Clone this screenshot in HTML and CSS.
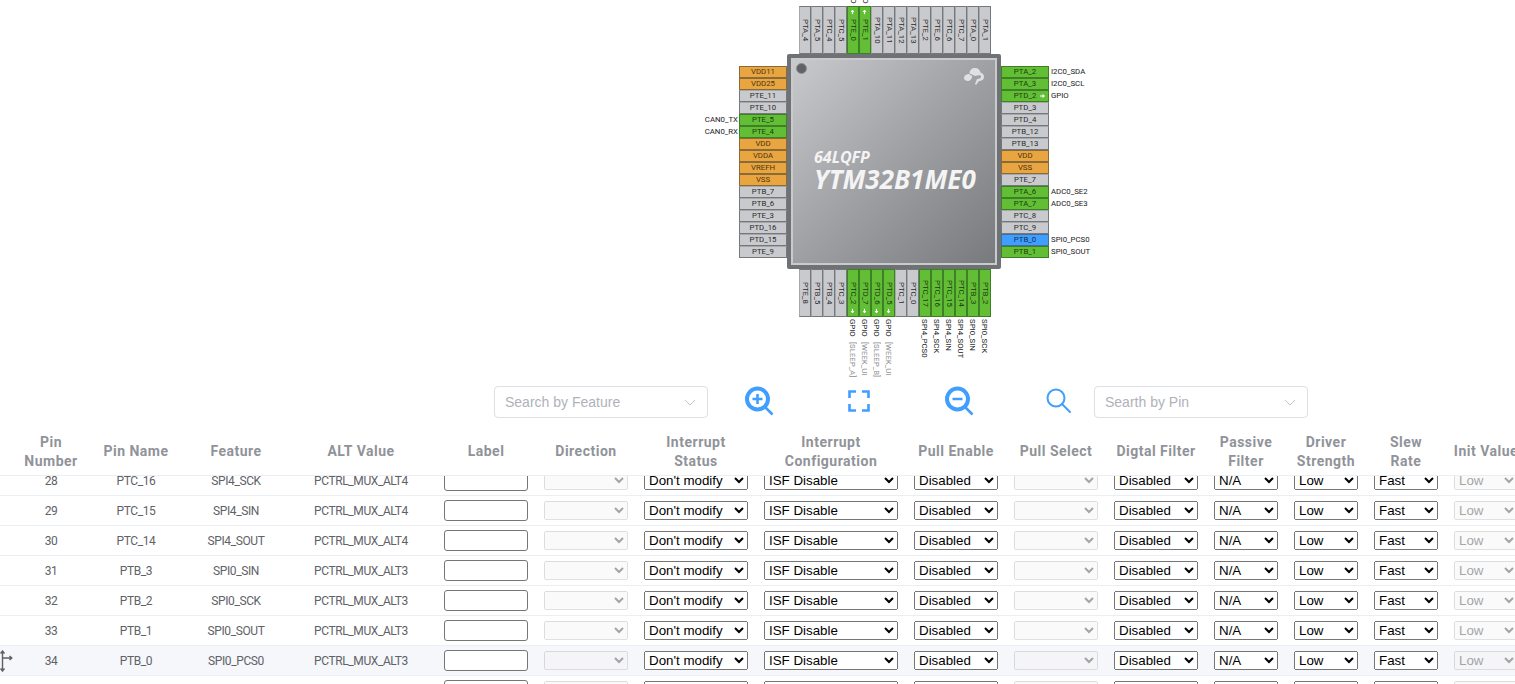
FILE: index.html
```html
<!DOCTYPE html>
<html lang="en">
<head>
<meta charset="utf-8">
<title>Pin configuration</title>
<link rel="stylesheet" href="styles.css">
</head>
<body>
<main class="page">
  <section class="stage">
    <div class="package">
      <div class="pins pins-top">
        <div class="pin">PTA_4</div><div class="pin">PTA_5</div><div class="pin">PTC_4</div><div class="pin">PTC_5</div>
        <div class="pin green">PTE_0<i class="arrow arrow-up"></i><span class="lab lab-top">GPIO</span></div>
        <div class="pin green">PTE_1<i class="arrow arrow-up"></i><span class="lab lab-top">GPIO</span></div>
        <div class="pin">PTA_10</div><div class="pin">PTA_11</div><div class="pin">PTA_12</div><div class="pin">PTA_13</div><div class="pin">PTE_2</div><div class="pin">PTE_6</div><div class="pin">PTC_6</div><div class="pin">PTC_7</div><div class="pin">PTA_0</div><div class="pin">PTA_1</div>
      </div>
      <div class="pins pins-left">
        <div class="pin orange">VDD11</div><div class="pin orange">VDD25</div><div class="pin">PTE_11</div><div class="pin">PTE_10</div>
        <div class="pin green">PTE_5<span class="lab lab-left">CAN0_TX</span></div>
        <div class="pin green">PTE_4<span class="lab lab-left">CAN0_RX</span></div>
        <div class="pin orange">VDD</div><div class="pin orange">VDDA</div><div class="pin orange">VREFH</div><div class="pin orange">VSS</div>
        <div class="pin">PTB_7</div><div class="pin">PTB_6</div><div class="pin">PTE_3</div><div class="pin">PTD_16</div><div class="pin">PTD_15</div><div class="pin">PTE_9</div>
      </div>
      <div class="chip">
        <div class="chip-top">
          <span class="dot"></span>
          <svg class="logo" viewBox="0 0 20 18"><path d="M5.500 5.500C5.500 2 8 0 11 0c3 0 5 2 5.500 4.500C19 5 20 7 20 9c0 3-3 4-5 4l-3 4-1-1 2-5c3 0 4-1 4-2.500 0-1.500-2-1.500-6-.5L9 7z"/><path d="M0 10c0-3 3-4 5-4l3.500 2.500C7.500 11 6 13 4 13c-2 0-4-1-4-3z"/></svg>
        </div>
        <div class="chip-pack">64LQFP</div>
        <div class="chip-name">YTM32B1ME0</div>
      </div>
      <div class="pins pins-right">
        <div class="pin green">PTA_2<span class="lab lab-right">I2C0_SDA</span></div>
        <div class="pin green">PTA_3<span class="lab lab-right">I2C0_SCL</span></div>
        <div class="pin green">PTD_2<i class="arrow arrow-right"></i><span class="lab lab-right">GPIO</span></div>
        <div class="pin">PTD_3</div><div class="pin">PTD_4</div><div class="pin">PTB_12</div><div class="pin">PTB_13</div>
        <div class="pin orange">VDD</div><div class="pin orange">VSS</div><div class="pin">PTE_7</div>
        <div class="pin green">PTA_6<span class="lab lab-right">ADC0_SE2</span></div>
        <div class="pin green">PTA_7<span class="lab lab-right">ADC0_SE3</span></div>
        <div class="pin">PTC_8</div><div class="pin">PTC_9</div>
        <div class="pin blue">PTB_0<span class="lab lab-right">SPI0_PCS0</span></div>
        <div class="pin green">PTB_1<span class="lab lab-right">SPI0_SOUT</span></div>
      </div>
      <div class="pins pins-bottom">
        <div class="pin">PTE_8</div><div class="pin">PTB_5</div><div class="pin">PTB_4</div><div class="pin">PTC_3</div>
        <div class="pin green">PTC_2<i class="arrow arrow-down"></i><span class="lab lab-bottom">GPIO<em>[SLEEP_A]</em></span></div>
        <div class="pin green">PTD_7<i class="arrow arrow-down"></i><span class="lab lab-bottom">GPIO<em>[WEEK_UI</em></span></div>
        <div class="pin green">PTD_6<i class="arrow arrow-down"></i><span class="lab lab-bottom">GPIO<em>[SLEEP_B]</em></span></div>
        <div class="pin green">PTD_5<i class="arrow arrow-down"></i><span class="lab lab-bottom">GPIO<em>[WEEK_UI</em></span></div>
        <div class="pin">PTC_1</div><div class="pin">PTC_0</div>
        <div class="pin green">PTC_17<span class="lab lab-bottom">SPI4_PCS0</span></div>
        <div class="pin green">PTC_16<span class="lab lab-bottom">SPI4_SCK</span></div>
        <div class="pin green">PTC_15<span class="lab lab-bottom">SPI4_SIN</span></div>
        <div class="pin green">PTC_14<span class="lab lab-bottom">SPI4_SOUT</span></div>
        <div class="pin green">PTB_3<span class="lab lab-bottom">SPI0_SIN</span></div>
        <div class="pin green">PTB_2<span class="lab lab-bottom">SPI0_SCK</span></div>
      </div>
    </div>
  </section>

  <section class="toolbar">
    <div class="search"><span>Search by Feature</span><svg viewBox="0 0 12 7"><path d="M1 1l5 5 5-5"/></svg></div>
    <div class="tools">
      <svg class="tool" viewBox="0 0 30 30"><circle class="bold" cx="13.5" cy="13" r="10.5"/><path class="mid" d="M21.5 21.5l7 7M8.5 13h10M13.500 8v10"/></svg>
      <svg class="tool" viewBox="0 0 30 30"><path class="mid" d="M5.500 12V5.500H12M18 5.500h6.500V12M24.500 18v6.500H18M12 24.500H5.500V18"/></svg>
      <svg class="tool" viewBox="0 0 30 30"><circle class="bold" cx="13.500" cy="13" r="10.500"/><path class="mid" d="M21.500 21.500l7 7M8.500 13h10"/></svg>
      <svg class="tool" viewBox="0 0 30 30"><circle class="thin" cx="12" cy="12" r="8.500"/><path class="thin" d="M18 18l8 8"/></svg>
    </div>
    <div class="search"><span>Searth by Pin</span><svg viewBox="0 0 12 7"><path d="M1 1l5 5 5-5"/></svg></div>
  </section>

  <section class="grid">
    <table class="head">
      <colgroup><col class="c16"><col class="c70"><col class="c100"><col class="c100"><col class="c150"><col class="c100"><col class="c100"><col class="c120"><col class="c150"><col class="c100"><col class="c100"><col class="c100"><col class="c80"><col class="c80"><col class="c80"><col class="c80"></colgroup>
      <thead><tr>
        <th></th><th>Pin<br>Number</th><th>Pin Name</th><th>Feature</th><th>ALT Value</th><th>Label</th><th>Direction</th><th>Interrupt<br>Status</th><th>Interrupt<br>Configuration</th><th>Pull Enable</th><th>Pull Select</th><th>Digtal Filter</th><th>Passive<br>Filter</th><th>Driver<br>Strength</th><th>Slew<br>Rate</th><th>Init Value</th>
      </tr></thead>
    </table>
    <div class="rows">
      <table class="body">
        <colgroup><col class="c16"><col class="c70"><col class="c100"><col class="c100"><col class="c150"><col class="c100"><col class="c100"><col class="c120"><col class="c150"><col class="c100"><col class="c100"><col class="c100"><col class="c80"><col class="c80"><col class="c80"><col class="c80"></colgroup>
        <tbody>
          <tr><td></td><td>28</td><td>PTC_16</td><td>SPI4_SCK</td><td>PCTRL_MUX_ALT4</td><td><input class="w84" type="text"></td><td><select class="w84" disabled><option></option></select></td><td><select class="w104"><option>Don't modify</option></select></td><td><select class="w134"><option>ISF Disable</option></select></td><td><select class="w84"><option>Disabled</option></select></td><td><select class="w84" disabled><option></option></select></td><td><select class="w84"><option>Disabled</option></select></td><td><select class="w64"><option>N/A</option></select></td><td><select class="w64"><option>Low</option></select></td><td><select class="w64"><option>Fast</option></select></td><td><select class="w64" disabled><option>Low</option></select></td></tr>
          <tr><td></td><td>29</td><td>PTC_15</td><td>SPI4_SIN</td><td>PCTRL_MUX_ALT4</td><td><input class="w84" type="text"></td><td><select class="w84" disabled><option></option></select></td><td><select class="w104"><option>Don't modify</option></select></td><td><select class="w134"><option>ISF Disable</option></select></td><td><select class="w84"><option>Disabled</option></select></td><td><select class="w84" disabled><option></option></select></td><td><select class="w84"><option>Disabled</option></select></td><td><select class="w64"><option>N/A</option></select></td><td><select class="w64"><option>Low</option></select></td><td><select class="w64"><option>Fast</option></select></td><td><select class="w64" disabled><option>Low</option></select></td></tr>
          <tr><td></td><td>30</td><td>PTC_14</td><td>SPI4_SOUT</td><td>PCTRL_MUX_ALT4</td><td><input class="w84" type="text"></td><td><select class="w84" disabled><option></option></select></td><td><select class="w104"><option>Don't modify</option></select></td><td><select class="w134"><option>ISF Disable</option></select></td><td><select class="w84"><option>Disabled</option></select></td><td><select class="w84" disabled><option></option></select></td><td><select class="w84"><option>Disabled</option></select></td><td><select class="w64"><option>N/A</option></select></td><td><select class="w64"><option>Low</option></select></td><td><select class="w64"><option>Fast</option></select></td><td><select class="w64" disabled><option>Low</option></select></td></tr>
          <tr><td></td><td>31</td><td>PTB_3</td><td>SPI0_SIN</td><td>PCTRL_MUX_ALT3</td><td><input class="w84" type="text"></td><td><select class="w84" disabled><option></option></select></td><td><select class="w104"><option>Don't modify</option></select></td><td><select class="w134"><option>ISF Disable</option></select></td><td><select class="w84"><option>Disabled</option></select></td><td><select class="w84" disabled><option></option></select></td><td><select class="w84"><option>Disabled</option></select></td><td><select class="w64"><option>N/A</option></select></td><td><select class="w64"><option>Low</option></select></td><td><select class="w64"><option>Fast</option></select></td><td><select class="w64" disabled><option>Low</option></select></td></tr>
          <tr><td></td><td>32</td><td>PTB_2</td><td>SPI0_SCK</td><td>PCTRL_MUX_ALT3</td><td><input class="w84" type="text"></td><td><select class="w84" disabled><option></option></select></td><td><select class="w104"><option>Don't modify</option></select></td><td><select class="w134"><option>ISF Disable</option></select></td><td><select class="w84"><option>Disabled</option></select></td><td><select class="w84" disabled><option></option></select></td><td><select class="w84"><option>Disabled</option></select></td><td><select class="w64"><option>N/A</option></select></td><td><select class="w64"><option>Low</option></select></td><td><select class="w64"><option>Fast</option></select></td><td><select class="w64" disabled><option>Low</option></select></td></tr>
          <tr><td></td><td>33</td><td>PTB_1</td><td>SPI0_SOUT</td><td>PCTRL_MUX_ALT3</td><td><input class="w84" type="text"></td><td><select class="w84" disabled><option></option></select></td><td><select class="w104"><option>Don't modify</option></select></td><td><select class="w134"><option>ISF Disable</option></select></td><td><select class="w84"><option>Disabled</option></select></td><td><select class="w84" disabled><option></option></select></td><td><select class="w84"><option>Disabled</option></select></td><td><select class="w64"><option>N/A</option></select></td><td><select class="w64"><option>Low</option></select></td><td><select class="w64"><option>Fast</option></select></td><td><select class="w64" disabled><option>Low</option></select></td></tr>
          <tr class="hover"><td><svg class="cursor" viewBox="0 0 13 22"><path d="M2.500 1v20M.5 3.500L2.500 1l2 2.500M.5 18.500L2.500 21l2-2.500M2.500 8h9M9.500 6l2.300 2-2.300 2"/></svg></td><td>34</td><td>PTB_0</td><td>SPI0_PCS0</td><td>PCTRL_MUX_ALT3</td><td><input class="w84" type="text"></td><td><select class="w84" disabled><option></option></select></td><td><select class="w104"><option>Don't modify</option></select></td><td><select class="w134"><option>ISF Disable</option></select></td><td><select class="w84"><option>Disabled</option></select></td><td><select class="w84" disabled><option></option></select></td><td><select class="w84"><option>Disabled</option></select></td><td><select class="w64"><option>N/A</option></select></td><td><select class="w64"><option>Low</option></select></td><td><select class="w64"><option>Fast</option></select></td><td><select class="w64" disabled><option>Low</option></select></td></tr>
          <tr><td></td><td>35</td><td>PTA_7</td><td>ADC0_SE3</td><td>PCTRL_MUX_ALT0</td><td><input class="w84" type="text"></td><td><select class="w84" disabled><option></option></select></td><td><select class="w104"><option>Don't modify</option></select></td><td><select class="w134"><option>ISF Disable</option></select></td><td><select class="w84"><option>Disabled</option></select></td><td><select class="w84" disabled><option></option></select></td><td><select class="w84"><option>Disabled</option></select></td><td><select class="w64"><option>N/A</option></select></td><td><select class="w64"><option>Low</option></select></td><td><select class="w64"><option>Fast</option></select></td><td><select class="w64" disabled><option>Low</option></select></td></tr>
        </tbody>
      </table>
    </div>
  </section>
</main>
</body>
</html>
```
FILE: styles.css
```css
* { box-sizing: border-box; }
html, body { margin: 0; height: 684px; overflow: hidden; background: #fff; }
.page { width: 1515px; height: 684px; overflow: hidden; font-family: Roboto, "Liberation Sans", sans-serif; }

/* chip diagram */
.stage { height: 386px; padding: 6px 0 0 739px; }
.package {
  display: grid;
  grid-template-columns: 48px 214px 48px;
  grid-template-rows: 48px 215px 48px;
  width: 310px;
}
.pins { display: flex; }
.pins-top { grid-column: 2; grid-row: 1; padding-left: 12px; }
.pins-bottom { grid-column: 2; grid-row: 3; padding-left: 12px; }
.pins-left { grid-column: 1; grid-row: 2; flex-direction: column; padding-top: 12px; }
.pins-right { grid-column: 3; grid-row: 2; flex-direction: column; padding-top: 12px; }

.pin {
  position: relative;
  display: flex;
  align-items: center;
  justify-content: center;
  flex: none;
  background: #c9cace;
  border: 1px solid #75777a;
  border-top-color: #a5a7aa;
  color: #2b2b2b;
  font-size: 7.8px;
  line-height: 10px;
  white-space: nowrap;
}
.pins-left .pin, .pins-right .pin { width: 48px; height: 12px; }
.pins-top .pin, .pins-bottom .pin { width: 12px; height: 48px; writing-mode: vertical-rl; border-top-color: #75777a; border-left-color: #a5a7aa; }
.pin.green { background: #62bf35; border-color: #3f7f25; color: #1d3a10; }
.pin.orange { background: #e9a53f; border-color: #8a6a38; color: #4d3511; }
.pin.blue { background: #409eff; border-color: #3f6f9e; color: #10304f; }

.arrow {
  position: absolute;
  width: 5px;
  height: 4px;
  background: #fff;
  clip-path: polygon(0 35%, 50% 35%, 50% 0, 100% 50%, 50% 100%, 50% 65%, 0 65%);
}
.arrow-right { right: 3px; top: 3px; }
.arrow-up { top: 3px; left: 2px; transform: rotate(-90deg); }
.arrow-down { bottom: 3px; left: 2px; transform: rotate(90deg); }

.lab { position: absolute; color: #222; font-size: 7.8px; line-height: 10px; }
.lab-left { right: calc(100% + 2px); top: 0; }
.lab-right { left: calc(100% + 3px); top: 0; }
.lab-top { bottom: calc(100% + 3px); left: 0; }
.lab-bottom { top: calc(100% + 3px); left: -1px; }
.lab em { font-style: normal; color: #8d8f92; margin-top: 5px; display: inline-block; }

.chip {
  grid-column: 2;
  grid-row: 2;
  padding: 5px 8px 0 5px;
  background: linear-gradient(135deg, #c9cacd 0%, #a3a4a8 45%, #77797c 100%);
  border: 4px solid #6f7275;
  border-radius: 2px;
  color: #f4f4f4;
  font-family: "Open Sans", sans-serif;
  font-style: italic;
  font-weight: 700;
  box-shadow: inset 0 0 0 2px #c8cacc;
}
.chip-top { display: flex; justify-content: space-between; align-items: flex-start; height: 85px; }
.dot { width: 11px; height: 11px; border-radius: 50%; background: #606265; border: 1px solid #8b8d90; }
.logo { width: 20px; height: 18px; margin: 5px 5px 0 0; fill: #dfe0e2; }
.chip-pack { margin: 0 0 0 18px; font-size: 16px; line-height: 18px; }
.chip-name { margin: 0 0 0 18px; font-size: 26px; line-height: 27px; white-space: nowrap; }

/* toolbar */
.toolbar { display: flex; align-items: flex-start; height: 32px; padding-left: 494px; margin-bottom: 12px; }
.search {
  display: flex;
  align-items: center;
  justify-content: space-between;
  width: 214px;
  height: 32px;
  padding: 0 11px 0 10px;
  border: 1px solid #dcdfe6;
  border-radius: 4px;
  color: #b0b2b9;
  font-family: "Liberation Sans", sans-serif;
  font-size: 14px;
}
.search svg { width: 12px; height: 7px; fill: none; stroke: #c0c4cc; stroke-width: 1; }
.tools { display: flex; gap: 70px; margin: 0 20px 0 36px; }
.tool { width: 30px; height: 30px; fill: none; stroke: #409eff; stroke-linecap: round; }
.tool .bold { stroke-width: 4; }
.tool .mid { stroke-width: 2.6; stroke-linecap: butt; }
.tool .thin { stroke-width: 2; }

/* table */
.grid { width: 1515px; overflow: hidden; }
table { width: 1526px; table-layout: fixed; border-collapse: separate; border-spacing: 0; }
.c16 { width: 16px; } .c70 { width: 70px; } .c80 { width: 80px; } .c100 { width: 100px; } .c120 { width: 120px; } .c150 { width: 150px; }
th {
  height: 46px;
  padding: 0 0 2px;
  border-bottom: 1px solid #ebeef5;
  color: #909399;
  font-size: 14px;
  font-weight: 700;
  letter-spacing: .5px;
  line-height: 19px;
  text-align: center;
  white-space: nowrap;
}
.rows { height: 208px; overflow: hidden; }
.body { margin-top: -10px; }
td {
  height: 30px;
  padding: 0;
  border-bottom: 1px solid #ebeef5;
  color: #606266;
  font-size: 12px;
  letter-spacing: -.4px;
  text-align: center;
  white-space: nowrap;
}
td:nth-child(-n+5) { padding-top: 1px; }
.hover td { background: #f5f7fa; }
.cursor { display: block; width: 13px; height: 22px; fill: none; stroke: #606060; stroke-width: 1.4; }
td input, td select { vertical-align: middle; font-family: "Liberation Sans", sans-serif; font-size: 13.333px; letter-spacing: 0; }
td input { height: 21px; padding: 1px 2px; border: 1px solid #767676; border-radius: 3px; background: #fff; }
.w84 { width: 84px; } .w104 { width: 104px; } .w134 { width: 134px; } .w64 { width: 64px; }
```
